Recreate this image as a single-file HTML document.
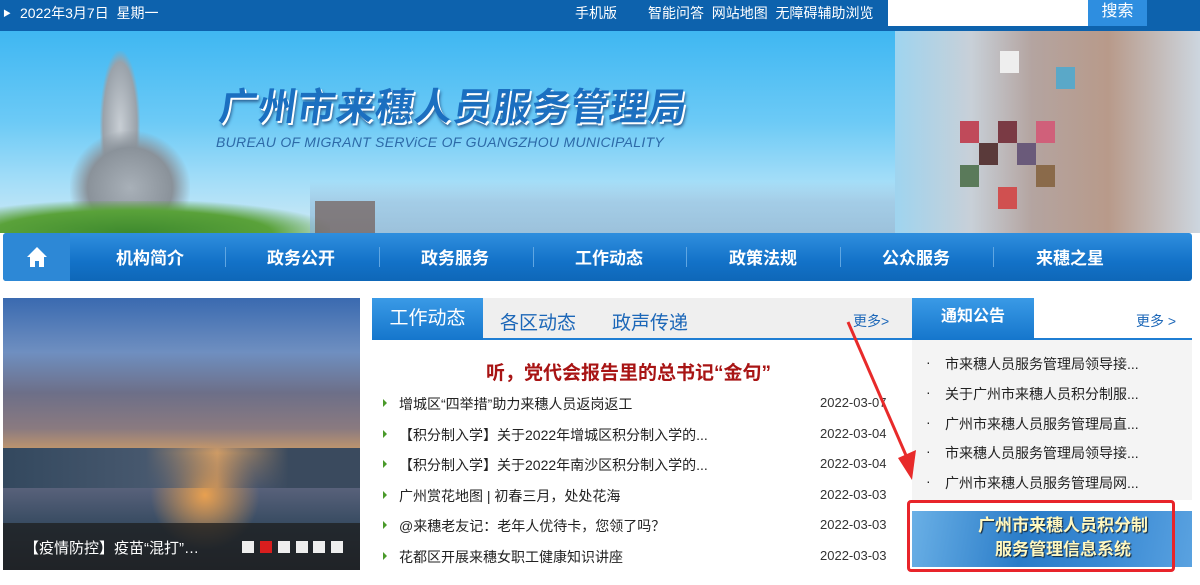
<!DOCTYPE html>
<html><head><meta charset="utf-8"><style>
*{margin:0;padding:0;box-sizing:border-box}
body{width:1200px;height:585px;background:#fff;font-family:"Liberation Sans","Noto Sans CJK SC",sans-serif;position:relative;overflow:hidden}
.abs{position:absolute}
#top{left:0;top:0;width:1200px;height:31px;background:#0d62ad;color:#fff;font-size:14px}
#top span{position:absolute;top:3px;white-space:nowrap}
#banner{left:0;top:31px;width:1200px;height:202px;background:linear-gradient(180deg,#3fb7f2 0%,#6ccaf6 45%,#a5def8 75%,#cfe9f5 100%)}
#nav{left:3px;top:233px;width:1189px;height:48px;background:linear-gradient(180deg,#2f8fde,#1372c8 60%,#0e67b8);border-radius:3px}
#nav .it{position:absolute;top:11px;color:#fff;font-size:17px;font-weight:bold;width:150px;text-align:center}
#nav .sep{position:absolute;top:14px;width:1px;height:20px;background:#5fa6e2}
.row{position:absolute;left:383px;font-size:14px;color:#222;white-space:nowrap}
.row:before{content:"";position:absolute;left:0;top:5px;border-left:4px solid #4a9a2a;border-top:4px solid transparent;border-bottom:4px solid transparent}
.row b{font-weight:normal;margin-left:16px}
.dt{position:absolute;left:820px;font-size:13px;color:#333}
.nt{position:absolute;left:926px;font-size:14px;color:#222;white-space:nowrap}
.nt:before{content:"·";position:absolute;left:0}
.nt b{font-weight:normal;margin-left:19px}
.px{position:absolute;width:19px;height:22px}
</style></head><body>
<div id="top" class="abs">
<span style="left:3px;top:8px;font-size:8px">▶</span>
<span style="left:20px">2022年3月7日&nbsp; 星期一</span>
<span style="left:575px">手机版</span>
<span style="left:648px">智能问答&nbsp; 网站地图&nbsp; 无障碍辅助浏览</span>
<div class="abs" style="left:888px;top:0;width:200px;height:26px;background:#fff"></div>
<div class="abs" style="left:1088px;top:0;width:59px;height:26px;background:#2e8ee0;color:#fff;font-size:16px;text-align:center;line-height:24px">搜索</div>
</div>
<div id="banner" class="abs">
<div class="abs" style="left:100px;top:20px;width:40px;height:150px;background:radial-gradient(ellipse at 50% 50%,#c8ced4,#9aa2aa 60%,transparent 72%)"></div>
<div class="abs" style="left:70px;top:100px;width:120px;height:95px;background:radial-gradient(ellipse at 50% 60%,#a8b0b8,#8a929a 50%,transparent 72%)"></div>
<div class="abs" style="left:0;top:170px;width:330px;height:32px;background:radial-gradient(ellipse at 40% 100%,#3e8a2e,#5aa23a 50%,transparent 75%)"></div>
<div class="abs" style="left:310px;top:150px;width:600px;height:52px;background:linear-gradient(180deg,transparent,#9cc4e0 40%,#86b0d0);opacity:.7"></div>
<div class="abs" style="left:315px;top:170px;width:60px;height:32px;background:#6a4a3e;opacity:.6"></div>
<div class="abs" style="left:220px;top:45px;font-size:38px;font-weight:bold;color:#1b6fc0;letter-spacing:1px;transform:skewX(-8deg);text-shadow:2px 2px 0 #fff,3px 4px 3px #2a5d90">广州市来穗人员服务管理局</div>
<div class="abs" style="left:216px;top:103px;font-size:14px;color:#2d6aa8;font-style:italic;letter-spacing:.3px">BUREAU OF MIGRANT SERViCE OF GUANGZHOU MUNICIPALITY</div>
<div class="abs" style="left:895px;top:0;width:305px;height:202px;background:linear-gradient(90deg,#9fd4ef,#c8d0d8 25%,#b4a4a0 45%,#b89a8a 70%,#cdd6df)"></div>
<div class="px" style="left:960px;top:90px;background:#c04a5a"></div>
<div class="px" style="left:998px;top:90px;background:#7a3a44"></div>
<div class="px" style="left:1036px;top:90px;background:#d0607a"></div>
<div class="px" style="left:979px;top:112px;background:#5a3a3a"></div>
<div class="px" style="left:1017px;top:112px;background:#6a5a7a"></div>
<div class="px" style="left:960px;top:134px;background:#5a7a5a"></div>
<div class="px" style="left:1036px;top:134px;background:#8a6a4a"></div>
<div class="px" style="left:998px;top:156px;background:#d05050"></div>
<div class="px" style="left:1056px;top:36px;background:#5aa8c8"></div>
<div class="px" style="left:1000px;top:20px;background:#eee"></div>
</div>
<div id="nav" class="abs">
<div class="abs" style="left:0;top:0;width:67px;height:48px;background:#2d88d6;border-radius:3px 0 0 3px"></div>
<svg class="abs" style="left:23px;top:13px" width="22" height="22" viewBox="0 0 22 22"><path d="M11 1L1 11h3v10h5v-6h4v6h5V11h3z" fill="#fff"/></svg>
<div class="it" style="left:72px">机构简介</div><div class="sep" style="left:222px"></div>
<div class="it" style="left:223px">政务公开</div><div class="sep" style="left:376px"></div>
<div class="it" style="left:377px">政务服务</div><div class="sep" style="left:530px"></div>
<div class="it" style="left:531px">工作动态</div><div class="sep" style="left:683px"></div>
<div class="it" style="left:685px">政策法规</div><div class="sep" style="left:837px"></div>
<div class="it" style="left:838px">公众服务</div><div class="sep" style="left:990px"></div>
<div class="it" style="left:992px">来穗之星</div>
</div>
<!-- left image -->
<div class="abs" style="left:3px;top:298px;width:357px;height:272px;background:linear-gradient(180deg,#3a6ab0 0%,#6f8fc0 20%,#6d6f88 35%,#8a7a80 48%,#c89a6a 57%,#58617a 70%,#33485e 85%,#2a3644 100%)"></div>
<div class="abs" style="left:150px;top:440px;width:110px;height:110px;background:radial-gradient(ellipse,#e8a050,transparent 70%)"></div>
<div class="abs" style="left:3px;top:448px;width:357px;height:40px;background:linear-gradient(90deg,#33485e,#47586e 40%,transparent 60%,#3a4a5e 80%)"></div>
<div class="abs" style="left:3px;top:523px;width:357px;height:47px;background:rgba(30,30,30,.75)"></div>
<div class="abs" style="left:24px;top:537px;color:#fff;font-size:15px;white-space:nowrap">【疫情防控】疫苗“混打”…</div>
<div class="abs" style="left:242px;top:541px;width:12px;height:12px;background:#eee"></div>
<div class="abs" style="left:260px;top:541px;width:12px;height:12px;background:#d81e1e"></div>
<div class="abs" style="left:278px;top:541px;width:12px;height:12px;background:#eee"></div>
<div class="abs" style="left:296px;top:541px;width:12px;height:12px;background:#eee"></div>
<div class="abs" style="left:313px;top:541px;width:12px;height:12px;background:#eee"></div>
<div class="abs" style="left:331px;top:541px;width:12px;height:12px;background:#eee"></div>
<!-- middle -->
<div class="abs" style="left:372px;top:298px;width:636px;height:42px;background:#efefef;border-bottom:2px solid #1f7ed3"></div>
<div class="abs" style="left:372px;top:298px;width:111px;height:42px;background:linear-gradient(180deg,#3a9ae6,#1576cc);color:#fff;font-size:19px;text-align:center;line-height:42px">工作动态</div>
<div class="abs" style="left:500px;top:308px;font-size:19px;color:#1c67b8">各区动态</div>
<div class="abs" style="left:612px;top:308px;font-size:19px;color:#1c67b8">政声传递</div>
<div class="abs" style="left:853px;top:311px;font-size:14px;color:#1c67b8">更多&gt;</div>
<div class="abs" style="left:486px;top:358px;font-size:19px;font-weight:bold;color:#a81414;white-space:nowrap">听，党代会报告里的总书记“金句”</div>
<div class="row" style="top:394px"><b>增城区“四举措”助力来穗人员返岗返工</b></div><div class="dt" style="top:395px">2022-03-07</div>
<div class="row" style="top:425px"><b>【积分制入学】关于2022年增城区积分制入学的...</b></div><div class="dt" style="top:426px">2022-03-04</div>
<div class="row" style="top:455px"><b>【积分制入学】关于2022年南沙区积分制入学的...</b></div><div class="dt" style="top:456px">2022-03-04</div>
<div class="row" style="top:486px"><b>广州赏花地图 | 初春三月，处处花海</b></div><div class="dt" style="top:487px">2022-03-03</div>
<div class="row" style="top:516px"><b>@来穗老友记：老年人优待卡，您领了吗？</b></div><div class="dt" style="top:517px">2022-03-03</div>
<div class="row" style="top:547px"><b>花都区开展来穗女职工健康知识讲座</b></div><div class="dt" style="top:548px">2022-03-03</div>
<!-- right -->
<div class="abs" style="left:912px;top:298px;width:280px;height:202px;background:#f4f4f4"></div>
<div class="abs" style="left:912px;top:298px;width:280px;height:42px;background:#fff;border-bottom:2px solid #1f7ed3"></div>
<div class="abs" style="left:912px;top:298px;width:122px;height:42px;background:linear-gradient(180deg,#3a9ae6,#1576cc);color:#fff;font-size:16px;font-weight:bold;text-align:center;line-height:38px">通知公告</div>
<div class="abs" style="left:1136px;top:311px;font-size:14px;color:#1c67b8">更多 &gt;</div>
<div class="nt" style="top:354px"><b>市来穗人员服务管理局领导接...</b></div>
<div class="nt" style="top:384px"><b>关于广州市来穗人员积分制服...</b></div>
<div class="nt" style="top:414px"><b>广州市来穗人员服务管理局直...</b></div>
<div class="nt" style="top:443px"><b>市来穗人员服务管理局领导接...</b></div>
<div class="nt" style="top:473px"><b>广州市来穗人员服务管理局网...</b></div>
<div class="abs" style="left:912px;top:511px;width:280px;height:56px;background:linear-gradient(100deg,#6ab0e6,#2a7cc8 40%,#3a8ad4 70%,#5aa2e0)"></div>
<div class="abs" style="left:978px;top:514px;font-size:17px;font-weight:bold;color:#fff8c0;line-height:24px;text-align:center;text-shadow:1px 1px 1px #123">广州市来穗人员积分制<br>服务管理信息系统</div>
<div class="abs" style="left:907px;top:500px;width:268px;height:72px;border:3px solid #e8242a;border-radius:4px"></div>
<svg class="abs" style="left:840px;top:310px" width="90" height="180"><path d="M8 12L68 150" stroke="#e82a2a" stroke-width="3"/><path d="M58 148L72 170L76 140Z" fill="#e82a2a"/></svg>
</body></html>
